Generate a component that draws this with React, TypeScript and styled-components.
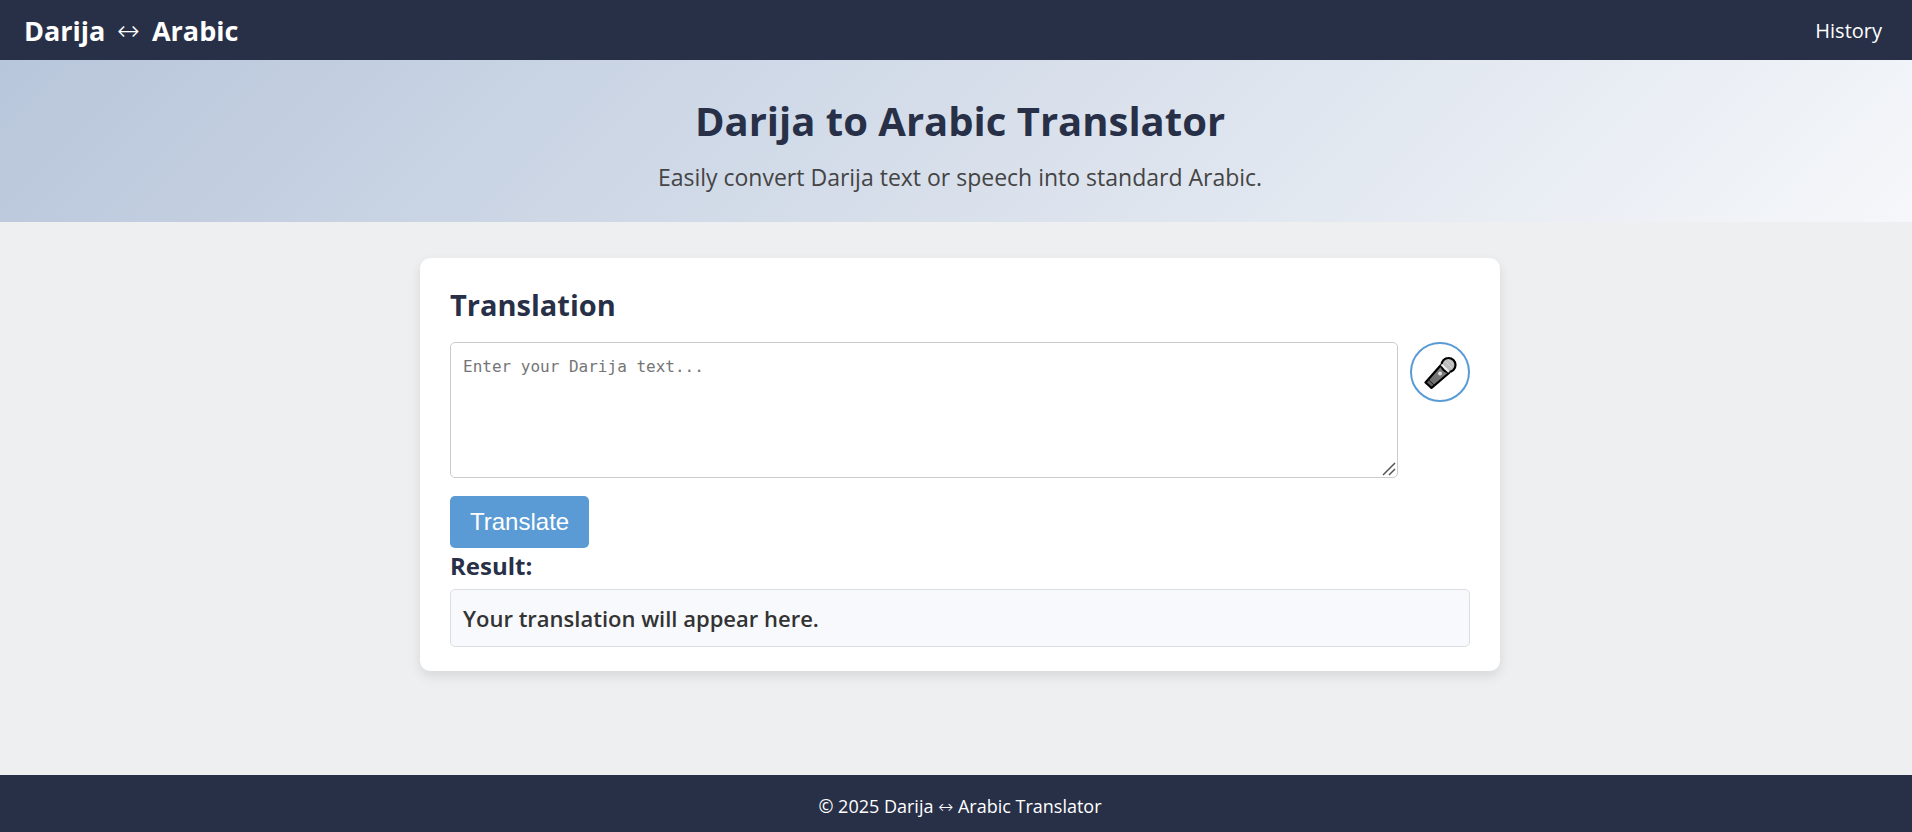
import React, { useState } from "react";
import styled, { createGlobalStyle } from "styled-components";

const navy = "#283048";
const blue = "#5b9bd5";

const GlobalStyle = createGlobalStyle`
  *, *::before, *::after { box-sizing: border-box; }
  body {
    margin: 0;
    background: #eeeff1;
    color: #333;
    font-family: "Open Sans", "Noto Sans", sans-serif;
  }
  h1, h2, h3, p { margin: 0; }
`;

const Page = styled.div`
  display: flex;
  flex-direction: column;
  min-height: 100vh;
`;

const NavBar = styled.header`
  display: flex;
  align-items: center;
  justify-content: space-between;
  padding: 13px 30px 11px 24px;
  background: ${navy};
  color: #fff;
`;

const Brand = styled.div`
  display: flex;
  align-items: center;
  gap: 12px;
  font-size: 27px;
  font-weight: 700;
  line-height: 36px;
`;

const Arrow = styled.span`
  font-family: "DejaVu Sans", sans-serif;
  font-weight: 200;
`;

const NavLink = styled.a`
  color: #fff;
  font-size: 20px;
  line-height: 30px;
  text-decoration: none;
`;

const Hero = styled.section`
  display: flex;
  flex-direction: column;
  align-items: center;
  gap: 8px;
  padding: 31px 24px 27px 32px;
  background: linear-gradient(135deg, #b8c6db, #f5f7fa);
  text-align: center;
`;

const HeroTitle = styled.h1`
  color: ${navy};
  font-size: 40px;
  line-height: 60px;
`;

const HeroText = styled.p`
  color: #444;
  font-size: 23px;
  line-height: 36px;
`;

const Main = styled.main`
  flex: 1;
  padding: 36px 24px 104px 32px;
`;

const Card = styled.section`
  display: flex;
  flex-direction: column;
  align-items: stretch;
  max-width: 1080px;
  margin: 0 auto;
  padding: 27px 30px 24px;
  border-radius: 10px;
  background: #fff;
  box-shadow: 0 5px 12px rgba(0, 0, 0, 0.1);
`;

const CardTitle = styled.h2`
  margin-bottom: 17px;
  color: ${navy};
  font-size: 29px;
  line-height: 40px;
`;

const InputRow = styled.div`
  display: flex;
  align-items: flex-start;
  gap: 12px;
  margin-bottom: 18px;
`;

const TextBoxFrame = styled.div`
  position: relative;
  display: flex;
  flex: 1;
`;

const TextBox = styled.textarea`
  flex: 1;
  height: 136px;
  padding: 12px;
  border: 1px solid #ccc;
  border-radius: 5px;
  background: #fff;
  font-family: "DejaVu Sans Mono", monospace;
  font-size: 16px;
  line-height: 24px;
  resize: vertical;

  &::placeholder { color: #757575; }
  &::-webkit-resizer { background: transparent; }
`;

const Grip = styled.svg`
  position: absolute;
  right: 2px;
  bottom: 2px;
  pointer-events: none;
`;

const MicButton = styled.button`
  display: flex;
  align-items: center;
  justify-content: center;
  width: 60px;
  height: 60px;
  padding: 0;
  border: 2px solid ${blue};
  border-radius: 50%;
  background: #fff;
  cursor: pointer;
`;

const TranslateButton = styled.button`
  align-self: flex-start;
  height: 52px;
  padding: 0 20px;
  border: 0;
  border-radius: 5px;
  background: ${blue};
  color: #fff;
  font-family: "Liberation Sans", Arial, sans-serif;
  font-size: 24px;
  cursor: pointer;
`;

const ResultTitle = styled.h3`
  margin-bottom: 5px;
  color: ${navy};
  font-size: 24px;
  line-height: 36px;
`;

const ResultBox = styled.output`
  display: block;
  padding: 12px;
  border: 1px solid #dcdde0;
  border-radius: 5px;
  background: #f8f9fd;
  font-size: 22px;
  font-weight: 600;
  line-height: 32px;
`;

const Footer = styled.footer`
  padding: 18px 24px 12px 32px;
  background: ${navy};
  color: #fff;
  font-size: 18px;
  line-height: 27px;
  text-align: center;
`;

const MicIcon = () => (
  <svg width="34" height="34" viewBox="0 0 34 34" aria-hidden="true">
    <defs>
      <linearGradient id="mic-body" x1="0" y1="1" x2="1" y2="0">
        <stop offset="0" stopColor="#444" />
        <stop offset="0.3" stopColor="#707070" />
        <stop offset="1" stopColor="#808080" />
      </linearGradient>
    </defs>
    <path d="M17.5 10.5 L2.5 27.5 L8.500 33 L26 18 Z" fill="url(#mic-body)" stroke="#000" strokeWidth="2.2" strokeLinejoin="round" />
    <path d="M5.5 24.5 L11.5 30.5" stroke="#222" strokeWidth="1" />
    <circle cx="25.5" cy="10" r="7" fill="#bcbcbc" stroke="#000" strokeWidth="2.2" />
    <path d="M18.5 9.5 L26 17" stroke="#ededed" strokeWidth="2.2" />
    <path d="M22 6 L29 13 M25 4.5 L30.5 10" stroke="#d2d2d2" strokeWidth="1" />
    <circle cx="17" cy="18.500" r="2" fill="#ddd" />
  </svg>
);

export default function App() {
  const [text, setText] = useState("");

  return (
    <Page>
      <GlobalStyle />
      <NavBar>
        <Brand>
          <span>Darija</span>
          <Arrow>↔</Arrow>
          <span>Arabic</span>
        </Brand>
        <nav>
          <NavLink href="#history">History</NavLink>
        </nav>
      </NavBar>
      <Hero>
        <HeroTitle>Darija to Arabic Translator</HeroTitle>
        <HeroText>Easily convert Darija text or speech into standard Arabic.</HeroText>
      </Hero>
      <Main>
        <Card>
          <CardTitle>Translation</CardTitle>
          <InputRow>
            <TextBoxFrame>
              <TextBox
                aria-label="Darija text"
                placeholder="Enter your Darija text..."
                value={text}
                onChange={(e) => setText(e.target.value)}
              />
              <Grip width="14" height="14" viewBox="0 0 14 14" aria-hidden="true">
                <path d="M1 13 L13 1 M7 13 L13 7" stroke="#555" strokeWidth="1.5" />
              </Grip>
            </TextBoxFrame>
            <MicButton type="button" aria-label="Record speech">
              <MicIcon />
            </MicButton>
          </InputRow>
          <TranslateButton type="button">Translate</TranslateButton>
          <ResultTitle>Result:</ResultTitle>
          <ResultBox>Your translation will appear here.</ResultBox>
        </Card>
      </Main>
      <Footer>
        © 2025 Darija <Arrow>↔</Arrow> Arabic Translator
      </Footer>
    </Page>
  );
}
